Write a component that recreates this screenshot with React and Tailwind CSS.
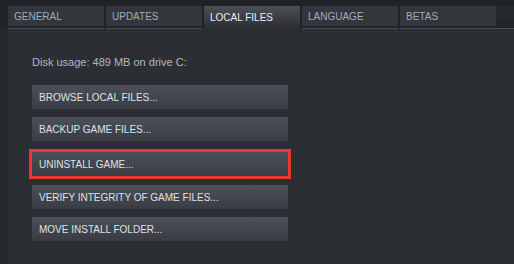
import React from "react";

const tabs = ["GENERAL", "UPDATES", "LOCAL FILES", "LANGUAGE", "BETAS"];

const actions = [
  { label: "BROWSE LOCAL FILES...", cls: "mt-0" },
  { label: "BACKUP GAME FILES...", cls: "mt-[8px]" },
  { label: "UNINSTALL GAME...", cls: "mt-[11px]", marked: true },
  { label: "VERIFY INTEGRITY OF GAME FILES...", cls: "mt-[9px]" },
  { label: "MOVE INSTALL FOLDER...", cls: "mt-[8px]" },
];

const App = () => {
  return (
    <div
      className="w-[514px] h-[264px] bg-[#26292e] flex flex-col overflow-hidden"
      style={{ fontFamily: '"Liberation Sans", Arial, sans-serif' }}
    >
      {/* Tab bar */}
      <div className="h-[29px] bg-[#212328] pl-2 pt-[6px] flex items-stretch">
        {tabs.map((tab, i) =>
          tab === "LOCAL FILES" ? (
            <div
              key={i}
              className="w-[96px] mr-[2px] bg-gradient-to-b from-[#4b5058] to-[#2b2e33] text-[#eceef0] text-[10px] pl-[6px] pt-[4px]"
            >
              {tab}
            </div>
          ) : (
            <div key={i} className="w-[96px] mr-[2px] border-b border-[#4a4d53]">
              <div className="h-[20px] bg-[#33363c] text-[#a3abb6] text-[10px] pl-[6px] flex items-center">
                {tab}
              </div>
            </div>
          )
        )}
        <div className="flex-1 -ml-[2px] border-b border-[#4a4d53]">
          <div className="h-[14px] bg-[#25282d]" />
        </div>
      </div>

      {/* Content */}
      <div className="flex-1 ml-2 bg-[#2b2e33] pl-6 pt-[27px]">
        <div className="text-[11px] leading-[13px] text-[#b3b8bd]">
          Disk usage: 489 MB on drive C:
        </div>
        <div className="mt-[16px] flex flex-col">
          {actions.map((a, i) => (
            <div
              key={i}
              className={`${a.cls} w-[256px] h-[24px] bg-gradient-to-b from-[#4c5059] to-[#393c43] text-[#dfe2e6] text-[10px] pl-[7px] flex items-center ${
                a.marked ? "outline-[3px] outline-solid outline-[#f03535]" : ""
              }`}
            >
              {a.label}
            </div>
          ))}
        </div>
      </div>
    </div>
  );
};

export default App;
